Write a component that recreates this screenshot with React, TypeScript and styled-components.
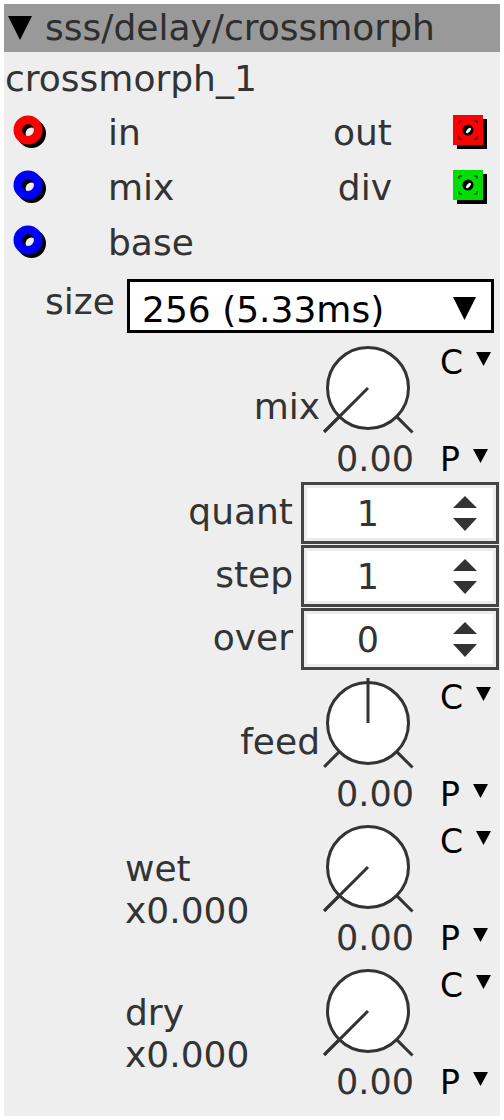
import React from 'react';
import styled, { createGlobalStyle } from 'styled-components';

const Global = createGlobalStyle`
  html, body { margin: 0; padding: 0; background: #ffffff; }
  body { font-family: "DejaVu Sans", sans-serif; }
`;

const Panel = styled.div`
  margin: 4px;
  width: 496px;
  height: 1112px;
  background: #eeeeee;
  color: #333333;
  font-family: "DejaVu Sans", sans-serif;
  display: flex;
  flex-direction: column;
`;

const Header = styled.div`
  height: 48px;
  background: #999999;
  display: flex;
  align-items: center;
  padding-left: 4px;
  gap: 13px;
  font-size: 36px;
  line-height: 48px;
  color: #2e2e2e;
  white-space: nowrap;
`;

const Title = styled.div`
  height: 53px;
  line-height: 53px;
  font-size: 36px;
  padding-left: 1px;
`;

const IORow = styled.div`
  height: 55px;
  display: flex;
  align-items: center;
  font-size: 36px;
  line-height: 55px;
`;

const InletSlot = styled.div`
  width: 104px;
  padding-left: 8px;
  box-sizing: border-box;
  display: flex;
  align-items: center;
`;

const InletLabel = styled.div`
  flex: 1;
`;

const OutletLabel = styled.div`
  text-align: right;
`;

const OutletSlot = styled.div`
  width: 108px;
  padding-left: 61px;
  box-sizing: border-box;
  display: flex;
  align-items: center;
`;

const SizeRow = styled.div`
  height: 65px;
  display: grid;
  grid-template-columns: 123px 367px;
  align-items: start;
  padding-top: 9px;
  box-sizing: border-box;
`;

const SizeLabel = styled.div`
  font-size: 36px;
  line-height: 40px;
  margin-top: 3px;
  padding-left: 41px;
`;

const Dropdown = styled.div`
  height: 54px;
  box-sizing: border-box;
  border: 3px solid #000;
  background: #fff;
  color: #000;
  display: flex;
  align-items: flex-start;
  justify-content: space-between;
  padding: 8px 15px 0 12px;
  font-size: 36px;
  line-height: 40px;
`;

const KnobUnit = styled.div`
  height: 144px;
  display: grid;
  grid-template-columns: 316px 98px 82px;
  grid-template-rows: 104px 40px;
`;

const KnobLabel = styled.div<{ $wide?: boolean }>`
  grid-row: 1 / 3;
  grid-column: 1;
  font-size: 36px;
  line-height: 42px;
  ${(p) =>
    p.$wide
      ? `padding: 34px 0 0 121px; text-align: left;`
      : `padding: 51px 0 0 0; text-align: right;`}
`;

const KnobValue = styled.div`
  grid-row: 2;
  grid-column: 2;
  font-size: 35px;
  line-height: 40px;
  text-align: right;
  padding-right: 4px;
`;

const SideTop = styled.div`
  grid-row: 1;
  grid-column: 3;
  padding: 9px 0 0 22px;
  font-size: 33px;
  line-height: 38px;
  color: #000;
  display: flex;
  align-items: flex-start;
  gap: 13px;
`;

const SideBottom = styled(SideTop)`
  grid-row: 2;
  padding-top: 2px;
`;

const Tri = styled.svg`
  margin-top: 8px;
  flex: none;
`;

const SpinGroup = styled.div`
  margin-top: 3px;
  display: flex;
  flex-direction: column;
  gap: 1px;
`;

const SpinRow = styled.div`
  height: 62px;
  display: grid;
  grid-template-columns: 297px 198px;
`;

const SpinLabel = styled.div`
  font-size: 36px;
  line-height: 40px;
  text-align: right;
  padding: 10px 8px 0 0;
`;

const SpinBox = styled.div`
  box-sizing: border-box;
  border: 3px solid #444;
  background: #fff;
  box-shadow: inset 0 0 0 3px #ececec;
  display: grid;
  grid-template-columns: 128px 1fr;
  align-items: center;
`;

const SpinValue = styled.div`
  font-size: 35px;
  line-height: 40px;
  text-align: center;
  padding-top: 2px;
`;

const SpinArrows = styled.div`
  display: flex;
  flex-direction: column;
  align-items: flex-start;
  padding-left: 21px;
  gap: 10px;
`;

const TwoLine = styled.div`
  display: block;
`;

function Inlet({ color }: { color: string }) {
  return (
    <svg width="38" height="38" viewBox="0 0 38 38">
      <circle cx="19.5" cy="19.5" r="10.2" fill="none" stroke="#000" strokeWidth="8.6" />
      <circle cx="16" cy="16" r="10.2" fill="none" stroke={color} strokeWidth="8.6" />
    </svg>
  );
}

function Outlet({ color }: { color: string }) {
  return (
    <svg width="36" height="36" viewBox="0 0 36 36">
      <rect x="4" y="4" width="30" height="30" fill="#000" />
      <rect x="0" y="0" width="30" height="30" fill={color} />
      <g stroke="#222" strokeWidth="1" fill="none">
        <path d="M6 9 V6 H9" />
        <path d="M21 6 H24 V9" />
        <path d="M24 21 V24 H21" />
        <path d="M9 24 H6 V21" />
      </g>
      <circle cx="15" cy="15" r="5.5" fill="#000" />
      <ellipse cx="15.5" cy="15.5" rx="3.2" ry="1.6" fill="#fff" transform="rotate(-50 15.5 15.5)" />
    </svg>
  );
}

function SmallTri() {
  return (
    <Tri width="15" height="14" viewBox="0 0 15 14">
      <polygon points="0,0 15,0 7.5,14" fill="#000" />
    </Tri>
  );
}

function Knob({ center }: { center?: boolean }) {
  const cx = 48;
  const cy = 53;
  const a = 0.7071;
  return (
    <svg width="98" height="104" viewBox="0 0 98 104">
      <circle cx={cx} cy={cy} r="40.5" fill="#fff" stroke="#333" strokeWidth="3" />
      <line x1={cx - 40.5 * a} y1={cy + 40.5 * a} x2={cx - 62 * a} y2={cy + 62 * a} stroke="#333" strokeWidth="3" />
      <line x1={cx + 40.5 * a} y1={cy + 40.5 * a} x2={cx + 63 * a} y2={cy + 63 * a} stroke="#333" strokeWidth="3" />
      {center ? (
        <line x1={cx} y1={cy} x2={cx} y2={cy - 45} stroke="#333" strokeWidth="3" />
      ) : (
        <line x1={cx} y1={cy} x2={cx - 62 * a} y2={cy + 62 * a} stroke="#333" strokeWidth="3" />
      )}
    </svg>
  );
}

function KnobBlock({ label, sub, center }: { label: string; sub?: string; center?: boolean }) {
  return (
    <KnobUnit>
      <KnobLabel $wide={!!sub}>
        {sub ? (
          <TwoLine>
            <div>{label}</div>
            <div>{sub}</div>
          </TwoLine>
        ) : (
          label
        )}
      </KnobLabel>
      <Knob center={center} />
      <SideTop>
        <span>C</span>
        <SmallTri />
      </SideTop>
      <KnobValue>0.00</KnobValue>
      <SideBottom>
        <span>P</span>
        <SmallTri />
      </SideBottom>
    </KnobUnit>
  );
}

function Spinner({ label, value }: { label: string; value: string }) {
  return (
    <SpinRow>
      <SpinLabel>{label}</SpinLabel>
      <SpinBox>
        <SpinValue>{value}</SpinValue>
        <SpinArrows>
          <svg width="24" height="12" viewBox="0 0 24 12">
            <polygon points="12,0 24,12 0,12" fill="#333" />
          </svg>
          <svg width="24" height="13" viewBox="0 0 24 13">
            <polygon points="0,0 24,0 12,13" fill="#333" />
          </svg>
        </SpinArrows>
      </SpinBox>
    </SpinRow>
  );
}

export default function App() {
  return (
    <>
      <Global />
      <Panel>
        <Header>
          <svg width="24" height="24" viewBox="0 0 24 24">
            <polygon points="0,0 24,0 12,24" fill="#000" />
          </svg>
          <span>sss/delay/crossmorph</span>
        </Header>
        <Title>crossmorph_1</Title>
        <IORow>
          <InletSlot>
            <Inlet color="#ff0000" />
          </InletSlot>
          <InletLabel>in</InletLabel>
          <OutletLabel>out</OutletLabel>
          <OutletSlot>
            <Outlet color="#ff0000" />
          </OutletSlot>
        </IORow>
        <IORow>
          <InletSlot>
            <Inlet color="#0000ff" />
          </InletSlot>
          <InletLabel>mix</InletLabel>
          <OutletLabel>div</OutletLabel>
          <OutletSlot>
            <Outlet color="#00dd00" />
          </OutletSlot>
        </IORow>
        <IORow>
          <InletSlot>
            <Inlet color="#0000ff" />
          </InletSlot>
          <InletLabel>base</InletLabel>
        </IORow>
        <SizeRow>
          <SizeLabel>size</SizeLabel>
          <Dropdown>
            <span>256 (5.33ms)</span>
            <svg width="23" height="23" viewBox="0 0 23 23" style={{ marginTop: 7 }}>
              <polygon points="0,0 23,0 11.5,23" fill="#000" />
            </svg>
          </Dropdown>
        </SizeRow>
        <KnobBlock label="mix" />
        <SpinGroup>
          <Spinner label="quant" value="1" />
          <Spinner label="step" value="1" />
          <Spinner label="over" value="0" />
        </SpinGroup>
        <KnobBlock label="feed" center />
        <KnobBlock label="wet" sub="x0.000" />
        <KnobBlock label="dry" sub="x0.000" />
      </Panel>
    </>
  );
}
